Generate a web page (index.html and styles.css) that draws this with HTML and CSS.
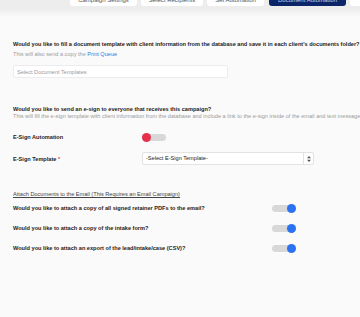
FILE: index.html
```html
<!DOCTYPE html>
<html lang="en">
<head>
  <meta charset="UTF-8">
  <title>Document Automation</title>
  <link rel="stylesheet" href="styles.css">
</head>
<body>
  <div class="tabbar">
    <div class="tabs">
      <a href="#" class="tab t1">Campaign Settings</a>
      <a href="#" class="tab t2">Select Recipients</a>
      <a href="#" class="tab t3">Set Automation</a>
      <a href="#" class="tab t4 active">Document Automation</a>
      <a href="#" class="tab t5">Review</a>
    </div>
  </div>

  <div class="main">
    <div class="section first">
      <h4>Would you like to fill a document template with client information from the database and save it in each client's documents folder?</h4>
      <p class="hint">This will also send a copy the <a href="#">Print Queue</a></p>
      <input type="text" class="doc-input" placeholder="Select Document Templates">
    </div>

    <div class="section second">
      <h4>Would you like to send an e-sign to everyone that receives this campaign?</h4>
      <p class="hint tight">This will fill the e-sign template with client information from the database and include a link to the e-sign inside of the email and text message</p>
    </div>

    <div class="row auto-row">
      <label>E-Sign Automation</label>
      <span class="toggle off"><span class="knob"></span></span>
    </div>

    <div class="row tpl-row">
      <label>E-Sign Template <span class="req">*</span></label>
      <div class="select">
        <span class="value">-Select E-Sign Template-</span>
        <span class="arrows">
          <svg width="4" height="6" viewBox="0 0 4 6"><path d="M2 0 4 2.2H0zM2 6 4 3.8H0z" fill="#555"/></svg>
        </span>
      </div>
    </div>

    <a href="#" class="attach-title">Attach Documents to the Email (This Requires an Email Campaign)</a>

    <div class="row attach">
      <label>Would you like to attach a copy of all signed retainer PDFs to the email?</label>
      <span class="toggle on"><span class="knob"></span></span>
    </div>
    <div class="row attach">
      <label>Would you like to attach a copy of the intake form?</label>
      <span class="toggle on"><span class="knob"></span></span>
    </div>
    <div class="row attach">
      <label>Would you like to attach an export of the lead/intake/case (CSV)?</label>
      <span class="toggle on"><span class="knob"></span></span>
    </div>
  </div>
</body>
</html>
```

FILE: styles.css
```css
* { box-sizing: border-box; }
body {
  margin: 0;
  font-family: 'Liberation Sans', Arial, sans-serif;
  background-color: #fafafa;
  color: #2b2b2b;
  overflow: hidden;
}
.tabbar {
  height: 17px;
  background: linear-gradient(#ededed 0, #ededed 9px, #fafafa 17px);
  overflow: hidden;
}
.tabs {
  display: flex;
  gap: 4px;
  padding-left: 70px;
  margin-top: -10px;
  white-space: nowrap;
}
.tab {
  flex: none;
  height: 16px;
  line-height: 20px;
  text-align: center;
  font-size: 6px;
  color: #555;
  background: white;
  border-radius: 0 0 3px 3px;
  text-decoration: none;
  overflow: hidden;
}
.t1 { width: 67px; }
.t2 { width: 62px; }
.t3 { width: 57px; }
.t4 { width: 77px; margin-left: 1px; }
.t5 { width: 40px; }
.tab.active {
  background: #0c2468;
  color: #c9d0e6;
}
.main {
  padding: 23px 13px 0;
}
h4 {
  margin: 0;
  font-size: 5.6px;
  line-height: 8px;
  font-weight: bold;
  color: #222;
  white-space: nowrap;
}
.hint {
  margin: 2px 0 0;
  font-size: 5.6px;
  line-height: 8px;
  color: #9a9a9a;
  white-space: nowrap;
}
.hint a {
  color: #2f7be0;
  text-decoration: none;
}
.hint.tight {
  margin-top: -1px;
}
.doc-input {
  display: block;
  width: 215px;
  height: 13px;
  margin-top: 7px;
  padding: 0 3px;
  font-family: inherit;
  font-size: 5.6px;
  border: 1px solid #ececec;
  border-radius: 2px;
  background: white;
}
.doc-input::placeholder {
  color: #9a9a9a;
}
.section.second {
  margin-top: 27px;
}
.row {
  display: flex;
  align-items: center;
}
.row label {
  flex: none;
  width: 129px;
  font-size: 5.6px;
  font-weight: bold;
  color: #222;
}
.auto-row {
  margin-top: 12px;
  height: 10px;
}
.tpl-row {
  margin-top: 10px;
  height: 13px;
}
.req {
  color: #e8334a;
}
.select {
  display: flex;
  width: 172px;
  height: 13px;
  background: white;
  border: 1px solid #e2e2e2;
  border-radius: 2px;
}
.select .value {
  flex: 1;
  padding-left: 3px;
  line-height: 11px;
  font-size: 5.6px;
  color: #222;
}
.select .arrows {
  display: flex;
  align-items: center;
  justify-content: center;
  width: 10px;
  border-left: 1px solid #e2e2e2;
}
.toggle {
  position: relative;
  display: block;
  width: 24px;
  height: 7px;
  background: #d8d8d8;
  border-radius: 4px;
}
.toggle .knob {
  position: absolute;
  top: -1px;
  width: 9px;
  height: 9px;
  border-radius: 50%;
}
.toggle.off .knob {
  left: 0;
  background: #e5304a;
}
.toggle.on .knob {
  right: 0;
  background: #2b72f0;
}
.attach-title {
  display: inline-block;
  margin-top: 26px;
  font-size: 5.6px;
  color: #444;
  text-decoration: underline;
}
.row.attach {
  height: 10px;
  margin-top: 3px;
}
.row.attach + .row.attach {
  margin-top: 10px;
}
.row.attach label {
  width: 259px;
}
```
